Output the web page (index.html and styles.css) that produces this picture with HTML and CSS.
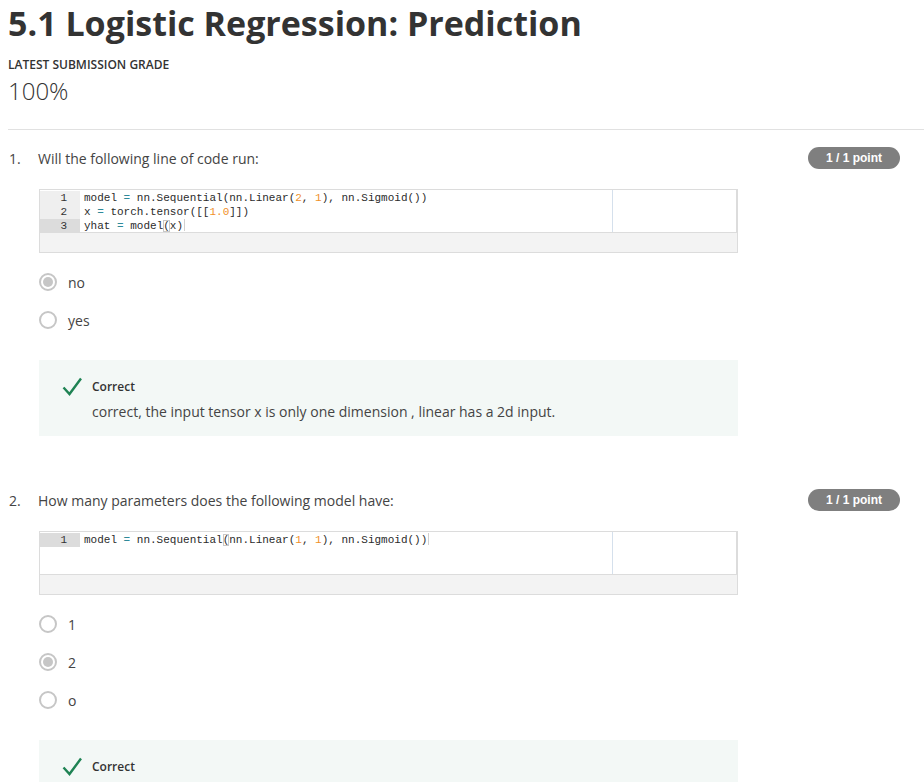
FILE: index.html
```html
<!DOCTYPE html>
<html>
<head>
<meta charset="utf-8">
<link rel="stylesheet" href="styles.css">
</head>
<body>
<div class="page">
  <h1 class="title">5.1 Logistic Regression: Prediction</h1>
  <div class="grade-label">LATEST SUBMISSION GRADE</div>
  <div class="grade">100%</div>
  <div class="rule"></div>

  <div class="question">
    <div class="q-head">
      <span class="q-num">1.</span>
      <span class="q-text">Will the following line of code run:</span>
      <span class="badge">1 / 1 point</span>
    </div>
    <div class="q-body">
      <div class="code">
        <div class="editor">
          <div class="gutter">
            <div class="gl">1</div>
            <div class="gl">2</div>
            <div class="gl active">3</div>
          </div>
          <div class="lines">
            <div class="cl">model <span class="op">=</span> nn.Sequential(nn.Linear(<span class="num">2</span>, <span class="num">1</span>), nn.Sigmoid())</div>
            <div class="cl">x <span class="op">=</span> torch.tensor([[<span class="num">1.0</span>]])</div>
            <div class="cl">yhat <span class="op">=</span> model<span class="br">(</span>x)<span class="cursor"></span></div>
          </div>
          <div class="margin-line"></div>
        </div>
        <div class="code-foot"></div>
      </div>
      <div class="options">
        <div class="opt"><span class="radio checked"></span><span class="opt-text">no</span></div>
        <div class="opt"><span class="radio"></span><span class="opt-text">yes</span></div>
      </div>
      <div class="feedback">
        <div class="fb-head">
          <svg class="check" width="20" height="20" viewBox="0 0 20 20"><path d="M1.5 10.5 L7.5 17 L19 1.5" fill="none" stroke="#1f8354" stroke-width="2.4"/></svg>
          <span class="fb-title">Correct</span>
        </div>
        <div class="fb-text">correct, the input tensor x is only one dimension , linear has a 2d input.</div>
      </div>
    </div>
  </div>

  <div class="question">
    <div class="q-head">
      <span class="q-num">2.</span>
      <span class="q-text">How many parameters does the following model have:</span>
      <span class="badge">1 / 1 point</span>
    </div>
    <div class="q-body">
      <div class="code">
        <div class="editor">
          <div class="gutter">
            <div class="gl active">1</div>
          </div>
          <div class="lines">
            <div class="cl">model <span class="op">=</span> nn.Sequential<span class="br">(</span>nn.Linear(<span class="num">1</span>, <span class="num">1</span>), nn.Sigmoid())<span class="cursor"></span></div>
          </div>
          <div class="margin-line"></div>
        </div>
        <div class="code-foot"></div>
      </div>
      <div class="options">
        <div class="opt"><span class="radio"></span><span class="opt-text">1</span></div>
        <div class="opt"><span class="radio checked"></span><span class="opt-text">2</span></div>
        <div class="opt"><span class="radio"></span><span class="opt-text">o</span></div>
      </div>
      <div class="feedback">
        <div class="fb-head">
          <svg class="check" width="20" height="20" viewBox="0 0 20 20"><path d="M1.5 10.5 L7.5 17 L19 1.5" fill="none" stroke="#1f8354" stroke-width="2.4"/></svg>
          <span class="fb-title">Correct</span>
        </div>
      </div>
    </div>
  </div>
</div>
</body>
</html>
```

FILE: styles.css
```css
html, body {
  margin: 0;
  padding: 0;
  background: #ffffff;
}
body {
  font-family: "Open Sans", "Noto Sans", sans-serif;
  color: #333333;
}
.page {
  padding-left: 8px;
}
.title {
  margin: 0;
  font-size: 34px;
  line-height: 47px;
  font-weight: 700;
  color: #333333;
  white-space: nowrap;
}
.grade-label {
  margin-top: 10px;
  font-size: 12px;
  line-height: 16px;
  font-weight: 600;
  color: #333333;
}
.grade {
  margin-top: 1px;
  font-size: 24px;
  line-height: 33px;
  font-weight: 300;
  color: #333333;
}
.rule {
  margin-top: 22px;
  height: 1px;
  background: #e1e1e1;
}
.question {
  margin-top: 17px;
}
.question + .question {
  margin-top: 53px;
}
.q-head {
  display: flex;
  align-items: center;
  height: 22px;
  padding-right: 24px;
  font-size: 14px;
  color: #444444;
}
.q-num {
  width: 30px;
  padding-left: 1px;
  box-sizing: border-box;
}
.q-text {
  flex: 1;
}
.badge {
  width: 92px;
  height: 22px;
  border-radius: 11px;
  background: #7f7f7f;
  color: #ffffff;
  font-family: "Liberation Sans", Arial, sans-serif;
  font-weight: 700;
  font-size: 12px;
  line-height: 22px;
  text-align: center;
}
.q-body {
  margin-left: 31px;
  width: 699px;
}
.code {
  margin-top: 20px;
  border: 1px solid #dcdcdc;
  background: #f3f3f3;
}
.editor {
  position: relative;
  display: flex;
  height: 42px;
  overflow: hidden;
  background: #ffffff;
  border-bottom: 1px solid #dcdcdc;
  border-right: 1px solid #dcdcdc;
  font-family: "Liberation Mono", "DejaVu Sans Mono", monospace;
  font-size: 11px;
  line-height: 14px;
}
.gutter {
  width: 40px;
  flex: none;
  padding-top: 1px;
}
.gl {
  height: 14px;
  background: #efefef;
  color: #333333;
  text-align: right;
  padding-right: 13px;
}
.gl.active {
  background: #dcdcdc;
}
.lines {
  padding-left: 4px;
  padding-top: 1px;
  color: #2b2b2b;
}
.cl {
  height: 14px;
  white-space: pre;
}
.op {
  color: #2f8a9a;
}
.num {
  color: #f0902a;
}
.br {
  outline: 1px solid #c8c8c8;
  outline-offset: -1px;
}
.cursor {
  display: inline-block;
  width: 1px;
  height: 12px;
  margin-left: 1px;
  vertical-align: -2px;
  background: #d0d0d0;
}
.margin-line {
  position: absolute;
  left: 572px;
  top: 0;
  bottom: 0;
  width: 1px;
  background: #d5e0ec;
}
.code-foot {
  height: 19px;
}
.options {
  margin-top: 19px;
  display: flex;
  flex-direction: column;
  gap: 18px;
}
.opt {
  display: flex;
  align-items: center;
  height: 20px;
  font-size: 14px;
  color: #444444;
}
.radio {
  width: 18px;
  height: 18px;
  box-sizing: border-box;
  border: 2px solid #c6c6c6;
  border-radius: 50%;
  margin-right: 11px;
  position: relative;
  flex: none;
}
.radio.checked::after {
  content: "";
  position: absolute;
  left: 2px;
  top: 2px;
  width: 10px;
  height: 10px;
  border-radius: 50%;
  background: #c6c6c6;
}
.feedback {
  margin-top: 30px;
  background: #f3f8f6;
  padding: 19px 0 14px 23px;
}
.fb-head {
  display: flex;
  align-items: center;
  height: 16px;
}
.check {
  margin-right: 10px;
  flex: none;
}
.fb-title {
  font-size: 12px;
  line-height: 16px;
  font-weight: 600;
  color: #333333;
}
.fb-text {
  margin-top: 7px;
  padding-left: 30px;
  font-size: 14px;
  line-height: 20px;
  color: #444444;
}
```
